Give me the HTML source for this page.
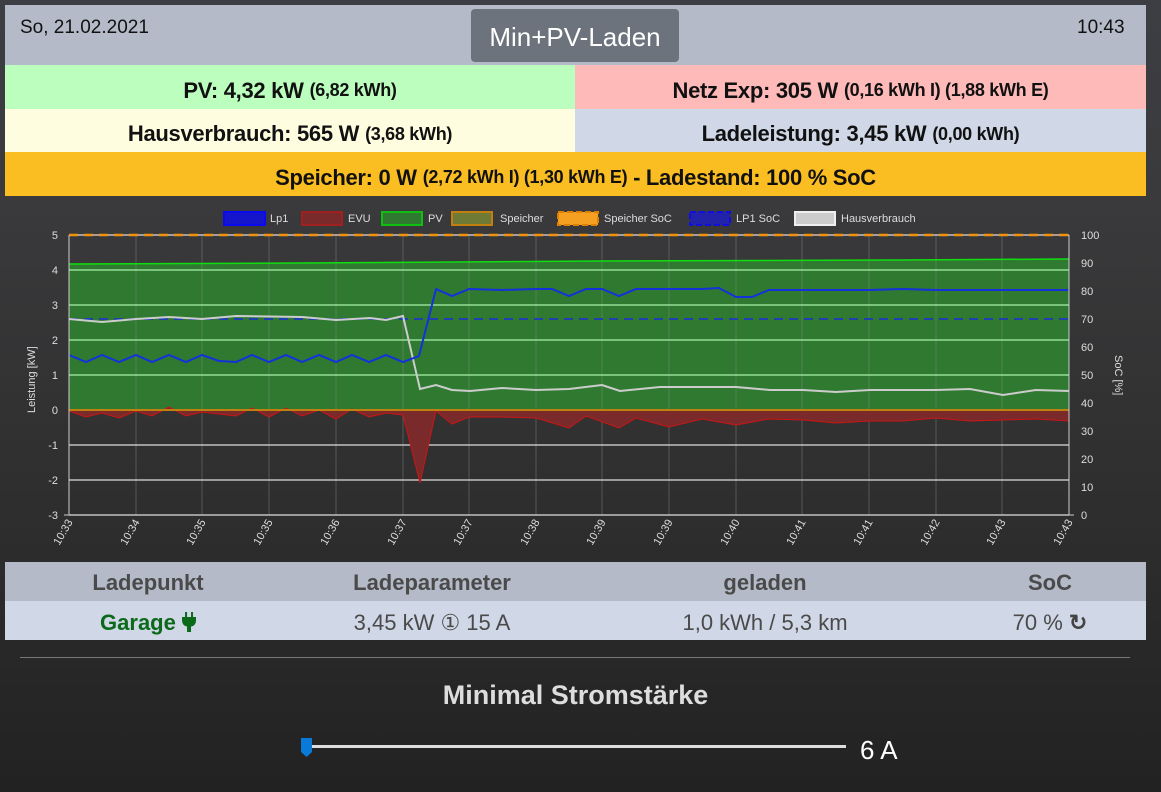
<!DOCTYPE html>
<html><head><meta charset="utf-8"><style>
*{margin:0;padding:0;box-sizing:border-box}
body{width:1161px;height:792px;overflow:hidden;background:linear-gradient(#3d3e43 0px,#3a3a3c 200px,#2c2c2c 560px,#222 792px);font-family:"Liberation Sans",sans-serif;position:relative}
.abs{position:absolute}
.row{position:absolute;display:flex;align-items:center;justify-content:center;font-weight:bold;font-size:22px;color:#111;white-space:nowrap;letter-spacing:-0.3px;padding-top:7px}
.row small{font-size:18px;margin-left:6px}
</style></head><body>
<div class="abs" style="left:5px;top:5px;width:1141px;height:60px;background:#b5bac8"></div>
<div class="abs" style="left:20px;top:17px;font-size:19px;color:#111">So, 21.02.2021</div>
<div class="abs" style="left:1077px;top:17px;font-size:19px;color:#111">10:43</div>
<div class="abs" style="left:471px;top:9px;width:208px;height:53px;background:#6c737c;border-radius:4px;color:#fff;font-size:26px;display:flex;align-items:center;justify-content:center;padding-top:4px">Min+PV-Laden</div>
<div class="row" style="left:5px;top:65px;width:570px;height:44px;background:#bcfebd">PV: 4,32 kW<small>(6,82 kWh)</small></div>
<div class="row" style="left:575px;top:65px;width:571px;height:44px;background:#feb9b9">Netz Exp: 305 W<small>(0,16 kWh I) (1,88 kWh E)</small></div>
<div class="row" style="left:5px;top:109px;width:570px;height:43px;background:#fefde0">Hausverbrauch: 565 W<small>(3,68 kWh)</small></div>
<div class="row" style="left:575px;top:109px;width:571px;height:43px;background:#d0d7e6">Ladeleistung: 3,45 kW<small>(0,00 kWh)</small></div>
<div class="row" style="left:5px;top:152px;width:1141px;height:44px;background:#fbbe22">Speicher: 0 W<small>(2,72 kWh I) (1,30 kWh E)</small>&nbsp;- Ladestand: 100 % SoC</div>

<svg class="abs" style="left:0;top:200px" width="1161" height="360" viewBox="0 200 1161 360" font-family="Liberation Sans, sans-serif">
<g font-size="11" fill="#ddd">
<rect x="224" y="212" width="41" height="13" fill="#1515cc" stroke="#0a0aee" stroke-width="2"/><text x="270" y="222">Lp1</text>
<rect x="302" y="212" width="40" height="13" fill="#7a2a2a" stroke="#a02020" stroke-width="2"/><text x="348" y="222">EVU</text>
<rect x="382" y="212" width="40" height="13" fill="#2f7a30" stroke="#10c010" stroke-width="2"/><text x="428" y="222">PV</text>
<rect x="452" y="212" width="40" height="13" fill="#6f7a35" stroke="#c08010" stroke-width="2"/><text x="500" y="222">Speicher</text>
<rect x="558" y="212" width="40" height="13" fill="#f5a020" stroke="#e08000" stroke-width="2" stroke-dasharray="6 3"/><text x="604" y="222">Speicher SoC</text>
<rect x="690" y="212" width="40" height="13" fill="#2222aa" stroke="#1010dd" stroke-width="2" stroke-dasharray="6 3"/><text x="736" y="222">LP1 SoC</text>
<rect x="795" y="212" width="40" height="13" fill="#ccc" stroke="#eee" stroke-width="2"/><text x="841" y="222">Hausverbrauch</text>
</g>
<path d="M69 264 L300 263 L600 261 L900 260 L1069 259 L1069 410 L69 410Z" fill="#2f7a30"/>
<g stroke="#888" stroke-opacity="0.45" stroke-width="1">
<path d="M136 235V515M202 235V515M269 235V515M336 235V515M403 235V515M469 235V515M536 235V515M602 235V515M669 235V515M736 235V515M802 235V515M869 235V515M936 235V515M1002 235V515"/>
</g>
<g stroke="#a8f0a8" stroke-width="1.2"><path d="M69 270H1069M69 305H1069M69 340H1069M69 375H1069"/></g>
<g stroke="#ddd" stroke-width="1.2"><path d="M69 445H1069M69 480H1069M69 515H1069M69 235H1069"/></g>
<path d="M69 264 L300 263 L600 261 L900 260 L1069 259" fill="none" stroke="#10dd10" stroke-width="1.5"/>
<path d="M69 411 L86 417 L102 413 L119 418 L136 411 L152 416 L169 407 L186 416 L202 412 L236 416 L252 408 L269 417 L286 408 L302 416 L319 410 L336 419 L352 409 L369 417 L386 413 L403 415 L420 483 L436 411 L452 424 L469 417 L502 417 L536 418 L569 428 L586 416 L619 428 L636 418 L669 427 L702 419 L736 425 L769 419 L803 420 L836 423 L870 421 L903 421 L936 418 L970 421 L1003 420 L1036 419 L1069 421 L1069 410 L69 410Z" fill="#7a2a2a" stroke="#cc1515" stroke-width="1"/>
<path d="M69 410H1069" stroke="#c08010" stroke-width="2"/>
<path d="M69 235H1069" stroke="#f0920f" stroke-width="2.5" stroke-dasharray="9 6"/>
<path d="M69 319H1069" stroke="#2040b0" stroke-width="2" stroke-dasharray="9 6"/>
<path d="M69 319 L102 322 L136 319 L169 317 L202 319 L236 316 L302 317 L336 320 L370 318 L386 320 L403 316 L420 389 L436 385 L452 390 L470 391 L502 388 L536 390 L569 389 L602 385 L620 391 L660 387 L736 387 L770 390 L803 390 L836 392 L870 390 L936 390 L970 389 L1003 395 L1036 390 L1069 391" fill="none" stroke="#ccc" stroke-width="2"/>
<path d="M69 355 L86 362 L102 355 L119 362 L136 355 L152 362 L169 355 L186 362 L202 355 L219 361 L236 362 L252 355 L269 362 L286 355 L302 362 L319 355 L336 362 L352 355 L369 362 L386 355 L403 362 L419 356 L436 289 L452 296 L469 289 L502 290 L536 289 L552 289 L569 296 L586 289 L602 289 L619 296 L636 289 L702 289 L719 288 L736 297 L752 297 L769 290 L803 290 L836 290 L870 290 L903 289 L936 290 L970 290 L1003 290 L1036 290 L1069 290" fill="none" stroke="#1530dd" stroke-width="2"/>
<path d="M69 235V515M1069 235V515M64 515H69M1069 515H1074" stroke="#ccc" stroke-width="1"/>
<g font-size="11" fill="#ddd" text-anchor="end">
<text x="58" y="239">5</text><text x="58" y="274">4</text><text x="58" y="309">3</text><text x="58" y="344">2</text><text x="58" y="379">1</text><text x="58" y="414">0</text><text x="58" y="449">-1</text><text x="58" y="484">-2</text><text x="58" y="519">-3</text>
</g>
<g font-size="11" fill="#ddd">
<text x="1081" y="239">100</text><text x="1081" y="267">90</text><text x="1081" y="295">80</text><text x="1081" y="323">70</text><text x="1081" y="351">60</text><text x="1081" y="379">50</text><text x="1081" y="407">40</text><text x="1081" y="435">30</text><text x="1081" y="463">20</text><text x="1081" y="491">10</text><text x="1081" y="519">0</text>
</g>
<text font-size="11" fill="#ddd" transform="translate(35 413) rotate(-90)">Leistung [kW]</text>
<text font-size="11" fill="#ddd" transform="translate(1115 355) rotate(90)">SoC [%]</text>
<g font-size="11" fill="#ddd" text-anchor="end">
<text transform="translate(73 522) rotate(-60)">10:33</text>
<text transform="translate(140 522) rotate(-60)">10:34</text>
<text transform="translate(206 522) rotate(-60)">10:35</text>
<text transform="translate(273 522) rotate(-60)">10:35</text>
<text transform="translate(340 522) rotate(-60)">10:36</text>
<text transform="translate(407 522) rotate(-60)">10:37</text>
<text transform="translate(473 522) rotate(-60)">10:37</text>
<text transform="translate(540 522) rotate(-60)">10:38</text>
<text transform="translate(606 522) rotate(-60)">10:39</text>
<text transform="translate(673 522) rotate(-60)">10:39</text>
<text transform="translate(740 522) rotate(-60)">10:40</text>
<text transform="translate(806 522) rotate(-60)">10:41</text>
<text transform="translate(873 522) rotate(-60)">10:41</text>
<text transform="translate(940 522) rotate(-60)">10:42</text>
<text transform="translate(1006 522) rotate(-60)">10:43</text>
<text transform="translate(1073 522) rotate(-60)">10:43</text>
</g>
</svg>

<div class="abs" style="left:5px;top:562px;width:1141px;height:39px;background:#b5bac8"></div>
<div class="abs" style="left:5px;top:601px;width:1141px;height:39px;background:#d0d7e6"></div>
<div class="abs" style="top:570px;left:0;width:1161px;font-size:22px;font-weight:bold;color:#4a4a4a">
<span class="abs" style="left:148px;transform:translateX(-50%);white-space:nowrap">Ladepunkt</span>
<span class="abs" style="left:432px;transform:translateX(-50%);white-space:nowrap">Ladeparameter</span>
<span class="abs" style="left:765px;transform:translateX(-50%);white-space:nowrap">geladen</span>
<span class="abs" style="left:1050px;transform:translateX(-50%);white-space:nowrap">SoC</span>
</div>
<div class="abs" style="top:610px;left:0;width:1161px;font-size:22px;color:#4a4a4a">
<span class="abs" style="left:148px;transform:translateX(-50%);white-space:nowrap;color:#0a6a1a;font-weight:bold">Garage <svg width="14" height="20" viewBox="0 0 14 20" style="vertical-align:-2px"><path d="M3 0h2v5h4V0h2v5h3v3c0 4-2 6-5 6.5V20H5v-5.5C2 14 0 12 0 8V5h3z" fill="#0a6a1a"/></svg></span>
<span class="abs" style="left:432px;transform:translateX(-50%);white-space:nowrap">3,45 kW ① 15 A</span>
<span class="abs" style="left:765px;transform:translateX(-50%);white-space:nowrap">1,0 kWh / 5,3 km</span>
<span class="abs" style="left:1050px;transform:translateX(-50%);white-space:nowrap">70 % <b style="color:#444">↻</b></span>
</div>
<div class="abs" style="left:20px;top:657px;width:1110px;height:1px;background:#777"></div>
<div class="abs" style="left:0;top:680px;width:1151px;text-align:center;font-size:27px;font-weight:bold;color:#ddd">Minimal Stromstärke</div>
<div class="abs" style="left:305px;top:745px;width:541px;height:3px;background:#ddd"></div>
<svg class="abs" style="left:300px;top:738px" width="13" height="20"><path d="M1 0h11v14l-5.5 5L1 14z" fill="#0a7ad8"/></svg>
<div class="abs" style="left:860px;top:735px;font-size:26px;color:#fff">6 A</div>
</body></html>
